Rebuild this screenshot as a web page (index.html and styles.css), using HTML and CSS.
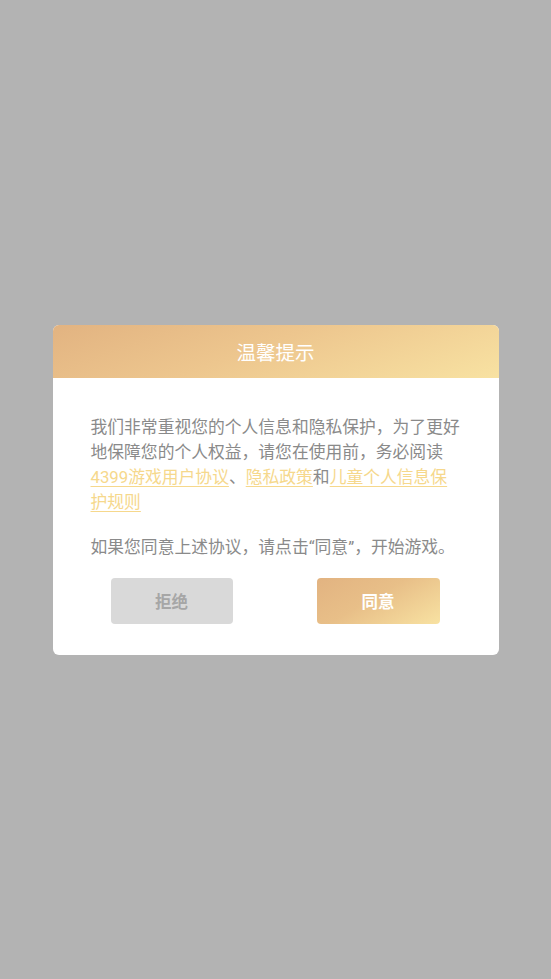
FILE: index.html
```html
<!DOCTYPE html>
<html lang="zh">
<head>
<meta charset="utf-8">
<link rel="stylesheet" href="styles.css">
</head>
<body>
<div class="overlay">
  <div class="dialog">
    <div class="dialog-header">温馨提示</div>
    <div class="dialog-body">
      <p class="para">我们非常重视您的个人信息和隐私保护，为了更好地保障您的个人权益，请您在使用前，务必阅读<a class="link">4399游戏用户协议</a>、<a class="link">隐私政策</a>和<a class="link">儿童个人信息保护规则</a></p>
      <p class="para para-2">如果您同意上述协议，请点击“同意”，开始游戏。</p>
      <div class="buttons">
        <div class="btn btn-reject">拒绝</div>
        <div class="btn btn-agree">同意</div>
      </div>
    </div>
  </div>
</div>
</body>
</html>
```
FILE: styles.css
```css
html, body {
  margin: 0;
  padding: 0;
  height: 100%;
}
body {
  background: #b3b3b3;
  font-family: Roboto, "Noto Sans CJK SC", sans-serif;
}
.overlay {
  height: 100%;
  display: flex;
  justify-content: center;
  align-items: center;
}
.dialog {
  width: 446px;
  margin-top: 1px;
  background: #fff;
  border-radius: 6px;
  overflow: hidden;
}
.dialog-header {
  height: 53px;
  display: flex;
  align-items: center;
  justify-content: center;
  color: #fff;
  font-size: 19.5px;
  background: linear-gradient(160deg, #e2b381 0%, #edc68e 45%, #f8e2a2 100%);
}
.dialog-body {
  padding: 37px 36px 31px 38px;
}
.para {
  margin: 0;
  font-size: 16.8px;
  line-height: 25px;
  color: #8a8a8a;
}
.para-2 {
  margin-top: 20px;
}
.link {
  color: #f6d88c;
  text-decoration: underline;
  text-underline-offset: 3px;
  text-decoration-thickness: 1px;
}
.buttons {
  display: flex;
  justify-content: space-between;
  margin-top: 18px;
  padding: 0 23px 0 20px;
}
.btn {
  width: 122px;
  height: 46px;
  border-radius: 4px;
  display: flex;
  align-items: center;
  justify-content: center;
  font-size: 16.5px;
  font-weight: bold;
}
.btn-reject {
  background: #d9d9d9;
  color: #a6a6a6;
}
.btn-agree {
  width: 123px;
  background: linear-gradient(150deg, #e2b381 0%, #e8bf88 45%, #f8e2a2 100%);
  color: #fff;
}
```
